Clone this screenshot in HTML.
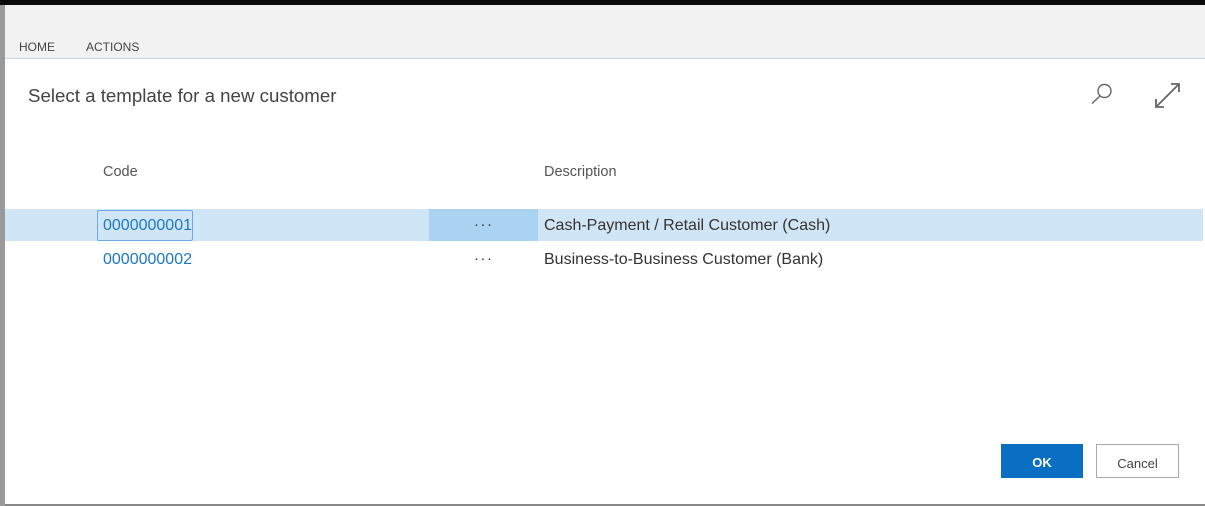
<!DOCTYPE html>
<html><head><style>
body{margin:0;width:1205px;height:506px;position:relative;overflow:hidden;background:#fff;font-family:"Liberation Sans",sans-serif}
.a{position:absolute}
</style></head><body>
<div class="a" style="left:0;top:0;width:1205px;height:5px;background:#0a0a0a"></div>
<div class="a" style="left:0;top:5px;width:5px;height:501px;background:#9a9a9a"></div>
<div class="a" style="left:5px;top:5px;width:1200px;height:53px;background:#f2f2f2;border-bottom:1px solid #c8d6e2"></div>
<div class="a" style="left:19px;top:40px;font-size:12px;color:#444">HOME</div>
<div class="a" style="left:86px;top:40px;font-size:12px;color:#444">ACTIONS</div>
<div class="a" style="left:28px;top:85px;font-size:18.7px;color:#444">Select a template for a new customer</div>
<svg class="a" style="left:1085px;top:78px" width="100" height="35" viewBox="1085 78 100 35" fill="none" stroke="#666" stroke-width="1.4">
<circle cx="1104.5" cy="91" r="6.5"/><line x1="1100" y1="96" x2="1092" y2="103.5"/>
<line x1="1156" y1="107" x2="1179" y2="84" stroke-width="1.8"/>
<polyline points="1171,84 1179,84 1179,92" stroke-width="1.8"/>
<polyline points="1156,99 1156,107 1164,107" stroke-width="1.8"/>
</svg>
<div class="a" style="left:103px;top:164px;font-size:14.5px;color:#555">Code</div>
<div class="a" style="left:544px;top:164px;font-size:14.5px;color:#555">Description</div>
<div class="a" style="left:5px;top:209px;width:1198px;height:32px;background:#d0e6f6"></div>
<div class="a" style="left:429px;top:209px;width:109px;height:32px;background:#a9d3f1"></div>
<div class="a" style="left:97px;top:210px;width:94px;height:29px;border:1px solid #6ea8e6;border-radius:2px"></div>
<div class="a" style="left:103px;top:217px;font-size:16px;color:#1a78c8">0000000001</div>
<div class="a" style="left:103px;top:251px;font-size:16px;color:#1a78c8">0000000002</div>
<div class="a" style="left:474px;top:216px;font-size:15px;color:#333;letter-spacing:1.5px">···</div>
<div class="a" style="left:474px;top:250px;font-size:15px;color:#333;letter-spacing:1.5px">···</div>
<div class="a" style="left:544px;top:217px;font-size:16px;color:#333">Cash-Payment / Retail Customer (Cash)</div>
<div class="a" style="left:544px;top:251px;font-size:16px;color:#333">Business-to-Business Customer (Bank)</div>
<div class="a" style="left:1001px;top:444px;width:82px;height:34px;background:#0a6fc2;color:#fff;font-weight:bold;font-size:13px;text-align:center;line-height:40px"><span style="position:relative;top:-1px">OK</span></div>
<div class="a" style="left:1096px;top:444px;width:81px;height:32px;border:1px solid #aaa;color:#444;font-size:13px;text-align:center;line-height:38px">Cancel</div>
<div class="a" style="left:5px;top:504px;width:1200px;height:2px;background:#888"></div>
</body></html>
